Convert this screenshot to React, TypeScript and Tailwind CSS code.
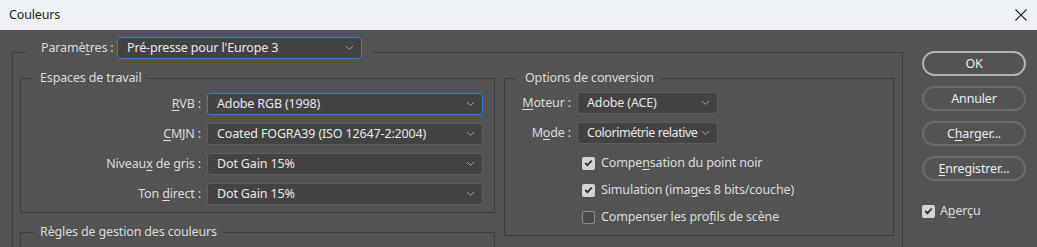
import React from "react";

const U = ({ children }: { children: React.ReactNode }) => (
  <span className="underline decoration-1 underline-offset-[2px]">{children}</span>
);

const Chevron = () => (
  <svg width="9" height="6" viewBox="0 0 9 6" className="shrink-0">
    <path d="M1 1 L4.5 4.5 L8 1" fill="none" stroke="#a3a3a3" strokeWidth="1" />
  </svg>
);

function Select({ value, className, textClass = "" }: { value: string; className: string; textClass?: string }) {
  return (
    <div
      className={`flex h-[22px] items-center justify-between rounded-[3px] border bg-[#434343] pl-[9px] pr-[7px] text-[#e8e8e8] ${className}`}
    >
      <span className={`whitespace-nowrap ${textClass}`}>{value}</span>
      <Chevron />
    </div>
  );
}

function Check({ checked }: { checked: boolean }) {
  return checked ? (
    <div className="flex h-[13px] w-[13px] shrink-0 items-center justify-center rounded-[2px] bg-[#d4d4d4]">
      <svg width="9" height="8" viewBox="0 0 9 8">
        <path d="M1.2 4 L3.5 6.2 L7.8 1.5" fill="none" stroke="#2e2e2e" strokeWidth="1.8" />
      </svg>
    </div>
  ) : (
    <div className="h-[13px] w-[13px] shrink-0 rounded-[2px] border border-[#8c8c8c] bg-[#4a4a4a]" />
  );
}

function Button({ children, primary }: { children: React.ReactNode; primary?: boolean }) {
  return (
    <div
      className={`flex h-[25px] w-[104px] items-center justify-center rounded-full border-2 text-[#ececec] ${
        primary ? "border-[#b4b4b4]" : "border-[#6a6a6a]"
      }`}
    >
      {children}
    </div>
  );
}

export default function App() {
  return (
    <div className="h-[247px] w-[1037px] overflow-hidden bg-[#535353] font-['Noto_Sans','Liberation_Sans',sans-serif] text-[12.5px] leading-[18px] tracking-[-0.15px] text-[#dcdcdc]">
      {/* title bar */}
      <div className="flex h-[30px] items-center justify-between bg-[#eef2f7] pl-[9px] pr-[10px] text-[#1a1a1a]">
        <span>Couleurs</span>
        <svg width="12" height="12" viewBox="0 0 12 12">
          <path d="M0.5 0.5 L11.5 11.5 M11.5 0.5 L0.5 11.5" stroke="#1a1a1a" strokeWidth="1.1" />
        </svg>
      </div>

      <div className="flex">
        {/* outer frame */}
        <fieldset className="ml-[12px] mt-[7px] h-[230px] w-[891px] shrink-0 border border-[#3d3d3d] p-0">
          <legend className="ml-[12px] flex items-center pb-[8px] pl-[16px] pr-[11px]">
            <span className="w-[70px] whitespace-nowrap">
              Paramè<U>t</U>res :
            </span>
            <Select value="Pré-presse pour l'Europe 3" className="ml-[6px] w-[245px] border-[#2f7de1]" />
          </legend>

          <div className="flex gap-[9px] px-[7px]">
            {/* left column */}
            <div className="flex w-[475px] flex-col">
              <fieldset className="mt-[2px] border border-[#3d3d3d] p-0">
                <legend className="ml-[12px] px-[7px] pr-[5px]">Espaces de travail</legend>
                <div className="grid grid-cols-[180px_276px] items-center gap-x-[6px] gap-y-[8px] pb-[7px] pt-[6px]">
                  <span className="text-right">
                    <U>R</U>VB :
                  </span>
                  <Select value="Adobe RGB (1998)" className="border-[#2f7de1]" />
                  <span className="text-right">
                    <U>C</U>MJN :
                  </span>
                  <Select value="Coated FOGRA39 (ISO 12647-2:2004)" className="border-[#5e5e5e]" />
                  <span className="text-right">
                    Niveau<U>x</U> de gris :
                  </span>
                  <Select value="Dot Gain 15%" className="border-[#5e5e5e]" />
                  <span className="text-right">
                    Ton <U>d</U>irect :
                  </span>
                  <Select value="Dot Gain 15%" className="border-[#5e5e5e]" />
                </div>
              </fieldset>

              <fieldset className="mt-[10px] h-[60px] border border-[#3d3d3d] p-0">
                <legend className="ml-[13px] px-[6px]">Règles de gestion des couleurs</legend>
              </fieldset>
            </div>

            {/* options */}
            <fieldset className="mt-[2px] h-[167px] w-[390px] border border-[#3d3d3d] p-0">
              <legend className="ml-[11px] pl-[9px] pr-[6px]">Options de conversion</legend>
              <div className="flex flex-col pt-[5px]">
                <div className="flex items-center">
                  <span className="w-[66px] text-right">
                    <U>M</U>oteur :
                  </span>
                  <Select value="Adobe (ACE)" className="ml-[6px] w-[141px] border-[#5e5e5e]" />
                </div>
                <div className="mt-[8px] flex items-center">
                  <span className="w-[66px] text-right">
                    M<U>o</U>de :
                  </span>
                  <Select
                    value="Colorimétrie relative"
                    className="ml-[6px] w-[141px] border-[#5e5e5e]"
                    textClass="tracking-[-0.45px]"
                  />
                </div>
                <div className="mt-[9px] flex flex-col gap-[7px] pl-[77px]">
                  <div className="flex h-[20px] items-center gap-[6px]">
                    <Check checked />
                    <span>
                      Compe<U>n</U>sation du point noir
                    </span>
                  </div>
                  <div className="flex h-[20px] items-center gap-[6px]">
                    <Check checked />
                    <span>
                      Simulation (ima<U>g</U>es 8 bits/couche)
                    </span>
                  </div>
                  <div className="flex h-[20px] items-center gap-[6px]">
                    <Check checked={false} />
                    <span>
                      Compenser les pro<U>f</U>ils de scène
                    </span>
                  </div>
                </div>
              </div>
            </fieldset>
          </div>
        </fieldset>

        {/* buttons */}
        <div className="ml-[19px] mt-[21px] flex flex-col gap-[10px]">
          <Button primary>OK</Button>
          <Button>Annuler</Button>
          <Button>
            C<U>h</U>arger...
          </Button>
          <Button>
            <U>E</U>nregistrer...
          </Button>
          <div className="mt-[10px] flex h-[20px] items-center gap-[5px]">
            <Check checked />
            <span>
              A<U>p</U>erçu
            </span>
          </div>
        </div>
      </div>
    </div>
  );
}
